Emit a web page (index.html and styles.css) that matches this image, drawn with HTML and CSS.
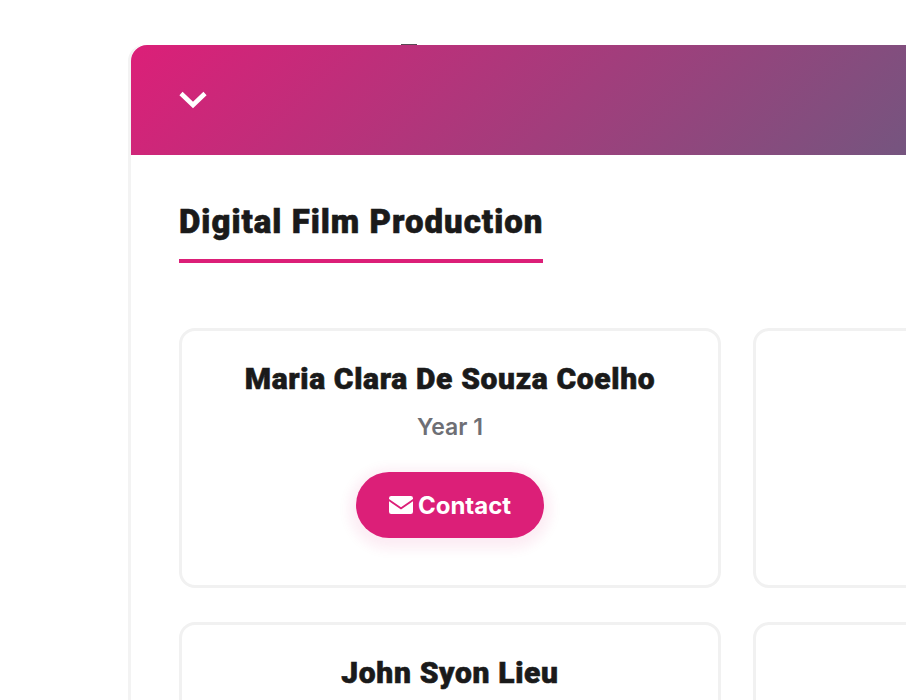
FILE: index.html
```html
<!DOCTYPE html>
<html>
<head>
  <title>Students</title>
  <link rel="stylesheet" href="styles.css">
</head>
<body>
  <section class="panel">
    <div class="panel-header">
      <svg class="chevron" viewBox="0 0 30 20" aria-hidden="true">
        <path d="M3 3.5 L15 15 L27 3.5" fill="none" stroke="#fff" stroke-width="4.6"/>
      </svg>
    </div>
    <div class="panel-body">
      <h2 class="course-title">Digital Film Production</h2>
      <div class="student-grid">
        <div class="student-card">
          <h3 class="student-name">Maria Clara De Souza Coelho</h3>
          <p class="student-year">Year 1</p>
          <a class="contact-btn" href="#">
            <svg class="mail-icon" viewBox="0 0 24 18" aria-hidden="true">
              <path d="M2.2 0H21.8A2.2 2.2 0 0 1 24 2.2V3.1L12 11.2 0 3.1V2.2A2.2 2.2 0 0 1 2.2 0Z" fill="#fff"/>
              <path d="M0 5.3 12 13.4 24 5.3V15.8A2.2 2.2 0 0 1 21.8 18H2.2A2.2 2.2 0 0 1 0 15.8Z" fill="#fff"/>
            </svg>
            Contact
          </a>
        </div>
        <div class="student-card"></div>
        <div class="student-card">
          <h3 class="student-name">John Syon Lieu</h3>
        </div>
        <div class="student-card"></div>
      </div>
    </div>
  </section>
</body>
</html>
```

FILE: styles.css
```css
html, body {
  overflow: hidden;
  height: 700px;
}
body {
  margin: 0;
  padding: 45px 0 0 128px;
  background-color: #fff;
  font-family: "Inter", sans-serif;
  color: #1a1a1a;
}
.panel {
  width: 1200px;
  border-left: 3px solid #f3f3f3;
  border-radius: 16px 0 0 0;
}
.panel-header {
  position: relative;
  height: 110px;
  padding-left: 47px;
  display: flex;
  align-items: center;
  background: linear-gradient(135deg, #dc1f78 0%, #75557f 100%);
  background-size: 775px 100%;
  background-repeat: no-repeat;
  border-radius: 16px 0 0 0;
}
/* tiny dark tab poking out of the top edge */
.panel-header::before {
  content: "";
  position: absolute;
  top: -1px;
  left: 270px;
  width: 16px;
  height: 1px;
  background-color: #5a4a55;
}
.chevron {
  width: 30px;
  height: 20px;
}
.panel-body {
  padding: 48px 48px 0;
}
.course-title {
  display: inline-block;
  margin: 0 0 65px;
  padding-bottom: 18px;
  border-bottom: 4px solid #dc1f78;
  font-family: "Roboto", sans-serif;
  font-size: 33px;
  font-weight: 900;
  line-height: 38px;
  letter-spacing: 1px;
  -webkit-text-stroke: 0.6px #1a1a1a;
}
.student-grid {
  display: grid;
  grid-template-columns: 542px 542px;
  grid-auto-rows: 260px;
  gap: 34px 32px;
}
.student-card {
  box-sizing: border-box;
  padding-top: 30px;
  border: 3px solid #f1f1f1;
  border-radius: 16px;
  text-align: center;
}
.student-name {
  margin: 0;
  font-family: "Roboto", sans-serif;
  font-size: 30px;
  font-weight: 900;
  line-height: 36px;
  letter-spacing: 0.65px;
  -webkit-text-stroke: 0.6px #1a1a1a;
}
.student-year {
  margin: 15px 0 0;
  font-size: 23px;
  font-weight: 600;
  line-height: 30px;
  color: #6e6f75;
}
.contact-btn {
  display: inline-flex;
  align-items: center;
  gap: 5px;
  height: 66px;
  margin-top: 30px;
  padding: 0 33px;
  border-radius: 33px;
  background-color: #dc1f78;
  box-shadow: 0 4px 12px 7px rgba(220, 31, 120, 0.08);
  color: #fff;
  font-size: 24px;
  font-weight: 700;
  text-decoration: none;
}
.mail-icon {
  width: 24px;
  height: 18px;
}
```
